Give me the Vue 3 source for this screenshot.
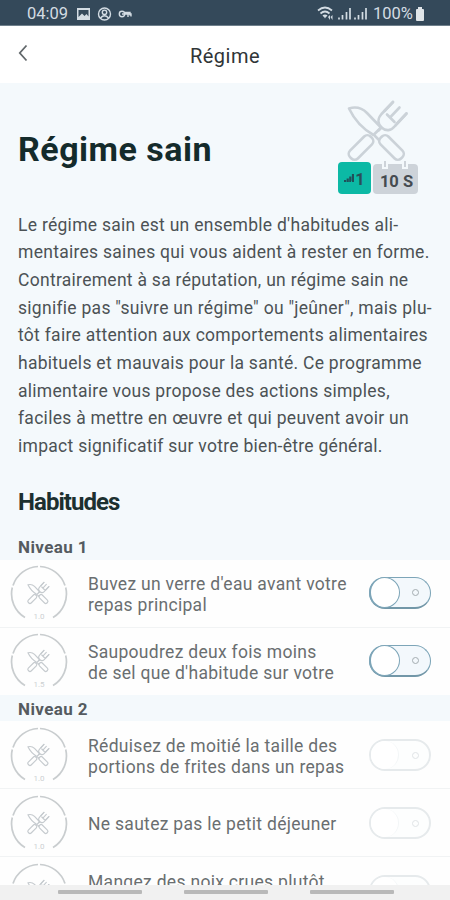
<template>
  <div class="phone">
    <svg class="defs" width="0" height="0" aria-hidden="true">
      <symbol id="cutlery" viewBox="0 0 66 66">
        <g fill="none" stroke="currentColor" stroke-linejoin="round" stroke-linecap="round">
          <path d="M4 10.500C12 8 18 11 22 15L36 29.500L28.500 37C18 31 9 21 4 10.500Z" />
          <path d="M48 4L36.500 16C32 21 33 26 36.500 29.500C41 33.500 46 33 50 28L61.500 15.500" />
          <path d="M54.500 9.500L45 19.500M48 4L39.500 13M61.500 15.500L52 25.500M42 16.500L49.500 24" />
          <path d="M33.500 32.500L36.500 29.500M30 38L34 42" />
          <rect x="32" y="44" width="29" height="11" rx="4.500" transform="rotate(45 46.500 49.500)" />
          <rect x="1.500" y="44" width="29" height="11" rx="4.500" transform="rotate(-45 16 49.500)" />
        </g>
      </symbol>
    </svg>

    <div class="status">
      <span class="clock">04:09</span>
      <svg class="status-left" width="56" height="14" viewBox="0 0 56 14">
        <path fill="#d3dce3" fill-rule="evenodd" d="M0 1H13V13H0ZM1.500 3V10L5 6.500L7.500 9L9.500 7L11.500 9.500V3Z" />
        <g fill="none" stroke="#d3dce3" stroke-width="1.400">
          <circle cx="27.500" cy="7" r="6" />
          <circle cx="27.500" cy="5.300" r="2.200" />
          <path d="M23.500 11Q27.500 6.500 31.500 11" />
          <circle cx="45" cy="7" r="2.700" />
          <path d="M45 7H54V9.500M48 5.500H53V8.500M51 7V10" />
        </g>
      </svg>
      <svg class="status-right" width="52" height="15" viewBox="0 0 52 15">
        <g fill="none" stroke="#d3dce3" stroke-width="1.700">
          <path d="M1 4.500Q8 -1.500 15 4.500M3.500 7.500Q8 3.500 12.500 7.500M6 10Q8 8.500 10 10" />
        </g>
        <path fill="#d3dce3" d="M6.500 10H9.500L8 12.500ZM11 11L13 9V14ZM13.500 11L15.500 9V14Z" />
        <path stroke="#d3dce3" stroke-width="1.700" d="M22 13.500V11.500M25.500 13.500V9M29.500 13.500V6M33 13.500V2M38 13.500V11.500M41.500 13.500V9M45.500 13.500V6M49 13.500V2" />
      </svg>
      <span class="percent">100%</span>
      <svg width="10" height="14" viewBox="0 0 10 14">
        <path fill="#e0e5e8" d="M3 0H7V2H8Q9 2 9 3V13Q9 14 8 14H2Q1 14 1 13V3Q1 2 2 2H3Z" />
      </svg>
    </div>

    <header class="topbar">
      <svg class="back" width="10" height="18" viewBox="0 0 10 18">
        <path d="M8.500 1.500L1.800 9L8.500 16.500" fill="none" stroke="#62686b" stroke-width="1.800" />
      </svg>
      <span class="topbar-title">Régime</span>
    </header>

    <section class="intro">
      <div class="hero">
        <h1>Régime sain</h1>
        <div class="summary">
          <svg class="hero-icon" width="66" height="66"><use href="#cutlery" /></svg>
          <div class="badges">
            <div class="badge level">
              <svg width="10" height="10" viewBox="0 0 10 10">
                <path d="M1 9V7M3.700 9V5.500M6.300 9V3.500M9 9V1" stroke="#20505a" stroke-width="2.200" />
              </svg>
              <span>1</span>
            </div>
            <div class="badge weeks"><span>10 S</span></div>
          </div>
        </div>
      </div>
      <p class="description">
        <span v-for="line in description" :key="line">{{ line }}</span>
      </p>
      <h2>Habitudes</h2>
    </section>

    <section v-for="level in levels" :key="level.name" :class="{ 'level-locked': level.locked }">
      <h3>{{ level.name }}</h3>
      <div v-for="habit in level.habits" :key="habit.lines[0]" class="habit">
        <div class="ring">
          <svg width="58" height="58" viewBox="0 0 58 58">
            <g fill="none" stroke="#c9cdcf" stroke-width="1.700">
              <path d="M28 1.500A27.500 27.500 0 0 0 3 20.500M30 1.500A27.500 27.500 0 0 1 55 20.500M2.300 22.500A27.500 27.500 0 0 0 15 52.500M55.700 22.500A27.500 27.500 0 0 1 43 52.500" />
            </g>
            <use href="#cutlery" x="16.500" y="16" width="24" height="24" />
          </svg>
          <span class="score">{{ habit.score }}</span>
        </div>
        <div class="habit-text">
          <span v-for="line in habit.lines" :key="line">{{ line }}</span>
        </div>
        <div class="toggle" :class="{ locked: level.locked }">
          <i class="knob"></i>
          <i class="dot"></i>
        </div>
      </div>
    </section>

    <nav class="navbar">
      <i></i><i></i><i></i>
    </nav>
  </div>
</template>

<script setup>
const description = [
  "Le régime sain est un ensemble d'habitudes ali-",
  'mentaires saines qui vous aident à rester en forme.',
  'Contrairement à sa réputation, un régime sain ne',
  'signifie pas "suivre un régime" ou "jeûner", mais plu-',
  'tôt faire attention aux comportements alimentaires',
  'habituels et mauvais pour la santé. Ce programme',
  'alimentaire vous propose des actions simples,',
  'faciles à mettre en œuvre et qui peuvent avoir un',
  'impact significatif sur votre bien-être général.',
]

const levels = [
  {
    name: 'Niveau 1',
    locked: false,
    habits: [
      { score: '1.0', lines: ["Buvez un verre d'eau avant votre", 'repas principal'] },
      { score: '1.5', lines: ['Saupoudrez deux fois moins', "de sel que d'habitude sur votre"] },
    ],
  },
  {
    name: 'Niveau 2',
    locked: true,
    habits: [
      { score: '1.0', lines: ['Réduisez de moitié la taille des', 'portions de frites dans un repas'] },
      { score: '1.0', lines: ['Ne sautez pas le petit déjeuner'] },
      { score: '', lines: ['Mangez des noix crues plutôt', '\u00a0'] },
    ],
  },
]
</script>

<style>
body {
  margin: 0;
  overflow: hidden;
}
</style>

<style scoped>
.phone {
  position: relative;
  width: 450px;
  height: 900px;
  overflow: hidden;
  background: #fefefe;
  font-family: Roboto, "Liberation Sans", sans-serif;
  color: #4c5255;
}
.defs {
  position: absolute;
}
.status {
  display: flex;
  align-items: center;
  box-sizing: border-box;
  height: 26px;
  padding: 2px 25px 0 27px;
  background: #34495a;
  border-bottom: 1px solid #6f808c;
  color: #d3dce3;
  font-size: 16.5px;
}
.clock {
  width: 50px;
}
.status-right {
  margin-left: auto;
}
.percent {
  width: 42px;
  margin-left: 4px;
}
.topbar {
  display: flex;
  align-items: center;
  height: 57px;
  padding: 0 18px;
  background: #fff;
}
.back {
  margin-top: -4px;
}
.topbar-title {
  flex: 1;
  margin-right: 10px;
  padding-top: 2px;
  text-align: center;
  font-size: 20px;
  letter-spacing: 0.5px;
  color: #303537;
}
.intro {
  box-sizing: border-box;
  height: 451px;
  padding: 15px 18px 0;
  background: #f4f9fc;
}
.hero {
  display: flex;
  justify-content: space-between;
  height: 113.5px;
}
h1 {
  margin: 31px 0 0;
  font-size: 34px;
  line-height: 40px;
  font-weight: 700;
  letter-spacing: 0.5px;
  color: #142b2b;
}
.summary {
  display: flex;
  flex-direction: column;
  align-items: center;
  width: 80px;
  margin-right: 14px;
}
.hero-icon {
  color: #cbd2d8;
  stroke-width: 2.6;
}
.badges {
  display: flex;
  gap: 2px;
  margin-top: -2px;
}
.badge {
  display: flex;
  align-items: center;
  justify-content: center;
  height: 32px;
  border-radius: 4px;
  font-weight: 700;
  font-size: 16.5px;
}
.level {
  width: 33px;
  gap: 1px;
  background: #0cb9a5;
  color: #285058;
}
.level span {
  padding-top: 2px;
}
.weeks {
  position: relative;
  width: 45px;
  height: 30px;
  margin-top: 2px;
  background: #cdd3d9;
  color: #454b50;
}
.weeks::before,
.weeks::after {
  content: "";
  position: absolute;
  top: -3px;
  left: 9px;
  width: 2px;
  height: 6px;
  background: #cdd3d9;
  border: solid #f4f9fc;
  border-width: 0 2px 2px;
}
.weeks::after {
  left: 29px;
}
.weeks span {
  padding: 5px 0 0 2px;
}
.description {
  margin: 0;
  font-size: 17.5px;
  line-height: 27.7px;
  letter-spacing: 0.28px;
}
.description span {
  display: block;
  white-space: nowrap;
}
h2 {
  margin: 27px 0 0;
  font-size: 24px;
  line-height: 28px;
  font-weight: 700;
  letter-spacing: -0.95px;
  color: #1c3030;
}
h3 {
  box-sizing: border-box;
  height: 26px;
  margin: 0;
  padding-left: 18px;
  background: #f4f9fc;
  font-size: 17px;
  line-height: 27px;
  font-weight: 700;
  letter-spacing: 0.4px;
  color: #555b60;
}
.level-locked h3 {
  line-height: 28px;
}
.habit {
  display: flex;
  align-items: center;
  box-sizing: border-box;
  height: 68px;
  padding: 0 19px 0 10px;
  border-bottom: 1px solid #f1f3f4;
}
.habit:last-child {
  height: 67px;
  border-bottom: 0;
}
.level-locked .habit {
  padding-top: 2px;
}
.ring {
  position: relative;
  width: 58px;
  height: 58px;
  color: #c6cbcf;
  stroke-width: 3.2;
}
.score {
  position: absolute;
  bottom: 1px;
  left: 0;
  width: 58px;
  text-align: center;
  font-size: 8px;
  line-height: 10px;
  color: #ccd0d2;
}
.habit-text {
  flex: 1;
  padding: 2px 0 0 20px;
  font-size: 17.5px;
  line-height: 20.7px;
  letter-spacing: 0.3px;
  color: #6a6e70;
}
.habit-text span {
  display: block;
  white-space: nowrap;
}
.toggle {
  display: flex;
  align-items: center;
  justify-content: space-between;
  box-sizing: border-box;
  width: 62px;
  height: 32px;
  margin-top: -1px;
  padding-right: 11px;
  border: 1px solid #7da5b8;
  border-bottom: 2px solid #7297a8;
  border-radius: 16px;
  background: #f3f8fc;
}
.knob {
  box-sizing: border-box;
  width: 31px;
  height: 31px;
  margin: 0 0 0 -1px;
  border: 1px solid #7da5b8;
  border-left-width: 2px;
  border-radius: 50%;
  background: #fff;
}
.dot {
  box-sizing: border-box;
  width: 7px;
  height: 7px;
  border: 1px solid #a4acb0;
  border-radius: 50%;
}
.locked {
  border: 2px solid #e6eaec;
  background: #fdfefe;
  padding-right: 10px;
}
.locked .knob {
  width: 28px;
  height: 28px;
  margin: 0;
  border: 0;
  border-right: 1px solid #f3f6f7;
}
.locked .dot {
  border-color: #e0e4e6;
}
.navbar {
  position: absolute;
  left: 0;
  bottom: 0;
  display: flex;
  gap: 42px;
  box-sizing: border-box;
  width: 450px;
  height: 15px;
  padding: 5px 0 0 58px;
  background: #f1f1f1;
}
.navbar i {
  width: 84px;
  height: 4px;
  border-radius: 1px;
  background: #b9b9b9;
}
</style>
